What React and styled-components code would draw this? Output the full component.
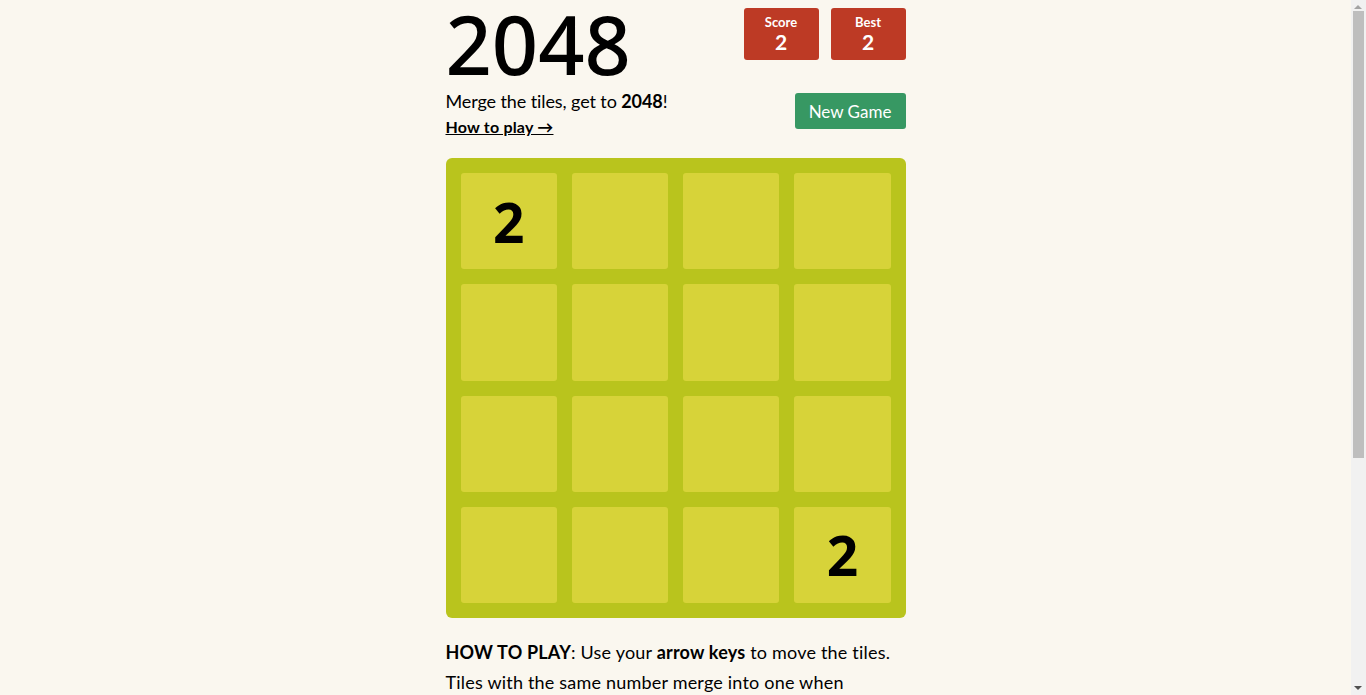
import React from 'react';
import styled, { createGlobalStyle } from 'styled-components';

const GlobalStyle = createGlobalStyle`
  html, body {
    margin: 0;
    padding: 0;
    background: #faf7ef;
    color: #000;
    font-family: Lato, "Noto Sans", sans-serif;
  }
  body {
    padding-right: 15px;
  }
`;

/* stand-in for the browser's scrollbar seen in the screenshot */
const ScrollTrack = styled.div`
  position: fixed;
  top: 0;
  right: 0;
  width: 15px;
  height: 100vh;
  background: #f1f1f1;
`;

const ScrollThumb = styled.div`
  position: absolute;
  top: 11px;
  left: 2px;
  width: 11px;
  height: 447px;
  background: #bebebe;
`;

const ScrollArrow = styled.div`
  position: absolute;
  left: 3px;
  width: 0;
  height: 0;
  border-left: 4.5px solid transparent;
  border-right: 4.5px solid transparent;
  ${(p) =>
    p.$down
      ? `bottom: 5px; border-top: 4px solid #505050;`
      : `top: 5px; border-bottom: 4px solid #a3a3a3;`}
`;

const Container = styled.div`
  width: 460px;
  margin: 0 auto;
  padding-bottom: 40px;
`;

const Header = styled.div`
  display: flex;
  justify-content: space-between;
  align-items: flex-start;
`;

const Intro = styled.div`
  display: flex;
  flex-direction: column;
  align-items: flex-start;
`;

const Title = styled.h1`
  margin: 0;
  padding-top: 3px;
  font-family: "Noto Sans", sans-serif;
  font-size: 81px;
  line-height: 82px;
  font-weight: 500;
`;

const Subtitle = styled.p`
  margin: 3px 0 0;
  font-size: 18px;
  line-height: 26px;
  letter-spacing: -0.1px;
`;

const HowLink = styled.a`
  margin-top: 1px;
  font-size: 16px;
  line-height: 24px;
  font-weight: 700;
  color: #000;
  text-decoration: underline;
  letter-spacing: 0.2px;
  cursor: pointer;
`;

const Controls = styled.div`
  display: flex;
  flex-direction: column;
  align-items: flex-end;
  padding-top: 8px;
`;

const Scores = styled.div`
  display: flex;
  gap: 12px;
`;

const ScoreBox = styled.div`
  width: 75px;
  height: 52px;
  border-radius: 3px;
  background: #bd3a25;
  color: #fff;
  display: flex;
  flex-direction: column;
  align-items: center;
  justify-content: center;
  font-weight: 700;
`;

const ScoreLabel = styled.span`
  font-size: 13px;
  line-height: 16px;
`;

const ScoreValue = styled.span`
  font-size: 21px;
  line-height: 24px;
`;

const NewGame = styled.button`
  margin-top: 33px;
  width: 111px;
  height: 36px;
  border: none;
  border-radius: 3px;
  background: #379863;
  color: #fff;
  font-family: inherit;
  font-size: 17px;
  cursor: pointer;
`;

const Board = styled.div`
  margin-top: 19px;
  width: 460px;
  height: 460px;
  box-sizing: border-box;
  padding: 15px;
  border-radius: 6px;
  background: #b9c41d;
  display: grid;
  grid-template-columns: repeat(4, 1fr);
  grid-template-rows: repeat(4, 1fr);
  gap: 15px;
`;

const Tile = styled.div`
  border-radius: 3px;
  background: #d7d339;
  display: flex;
  align-items: center;
  justify-content: center;
  font-family: "Noto Sans", sans-serif;
  font-size: 55px;
  font-weight: 700;
  color: #000;
`;

const Explanation = styled.p`
  margin: 19px 0 0;
  font-size: 18px;
  line-height: 30px;
  letter-spacing: 0.2px;
`;

const Rule = styled.hr`
  border: none;
  border-bottom: 1px solid #d8d4d0;
  margin: 30px 0;
`;

const Note = styled.p`
  margin: 0;
  font-size: 18px;
  line-height: 30px;
`;

const cells = [2, null, null, null, null, null, null, null, null, null, null, null, null, null, null, 2];

export default function App() {
  return (
    <>
      <GlobalStyle />
      <Container>
        <Header>
          <Intro>
            <Title>2048</Title>
            <Subtitle>
              Merge the tiles, get to <strong>2048</strong>!
            </Subtitle>
            <HowLink>How to play →</HowLink>
          </Intro>
          <Controls>
            <Scores>
              <ScoreBox>
                <ScoreLabel>Score</ScoreLabel>
                <ScoreValue>2</ScoreValue>
              </ScoreBox>
              <ScoreBox>
                <ScoreLabel>Best</ScoreLabel>
                <ScoreValue>2</ScoreValue>
              </ScoreBox>
            </Scores>
            <NewGame>New Game</NewGame>
          </Controls>
        </Header>
        <Board>
          {cells.map((v, i) => (
            <Tile key={i}>{v}</Tile>
          ))}
        </Board>
        <Explanation>
          <strong>HOW TO PLAY</strong>: Use your <strong>arrow keys</strong> to move the tiles.
          Tiles with the same number merge into one when
          <br />
          they touch. Add them up to reach <strong>2048!</strong>
        </Explanation>
        <Rule />
        <Note>
          <strong>Note:</strong> This is a simple clone of the original 2048 game. Use the arrow keys on
          your keyboard to play.
        </Note>
        <Rule />
        <Note>Have fun, and try to beat your best score!</Note>
      </Container>
      <ScrollTrack aria-hidden="true">
        <ScrollArrow />
        <ScrollThumb />
        <ScrollArrow $down />
      </ScrollTrack>
    </>
  );
}
